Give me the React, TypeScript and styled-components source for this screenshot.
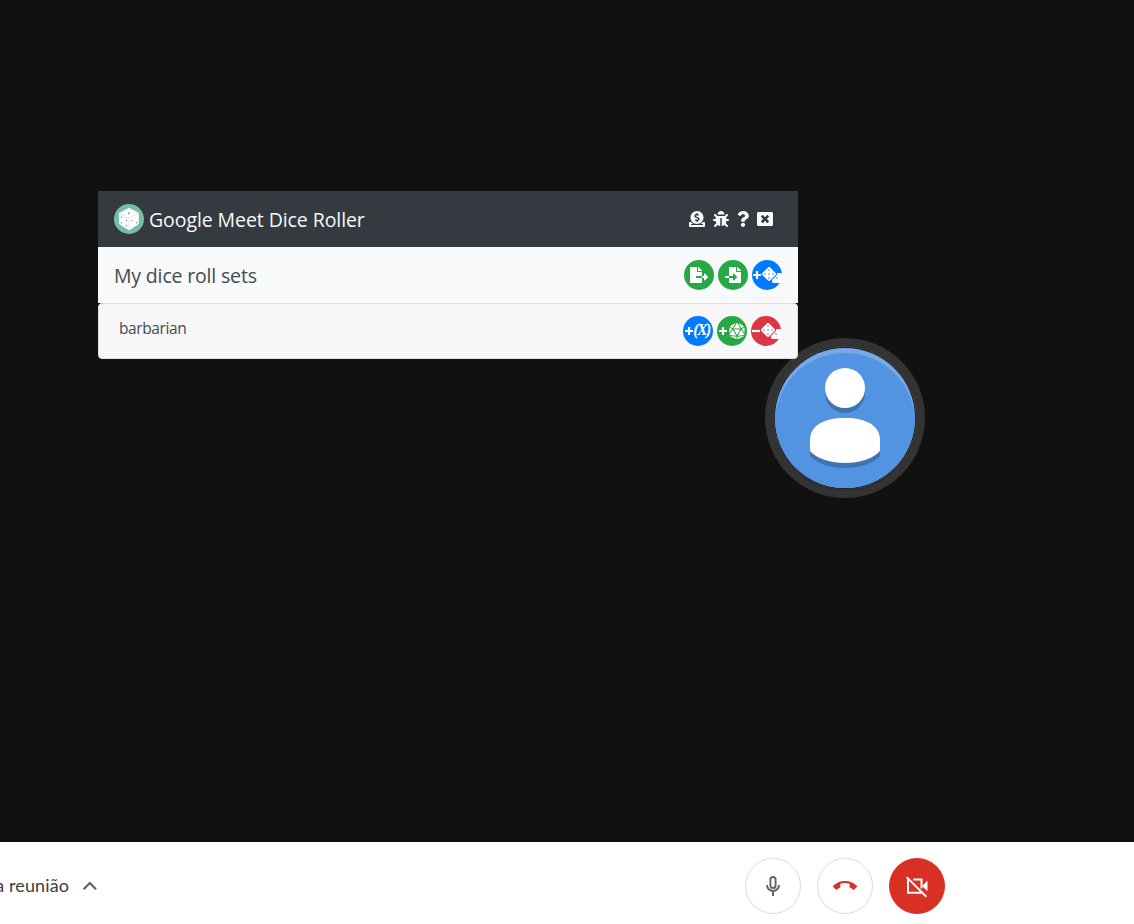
import React from "react";
import styled, { createGlobalStyle } from "styled-components";
import { FaBug, FaDice, FaDiceD20, FaDonate, FaFileExport, FaFileImport, FaQuestion, FaWindowClose } from "react-icons/fa";
import { MdCallEnd } from "react-icons/md";

const GlobalStyle = createGlobalStyle`
  *, *::before, *::after { box-sizing: border-box; }
  body { margin: 0; background: #111; overflow: hidden; }
`;

const Page = styled.div`
  height: 924px;
  display: flex;
  flex-direction: column;
  overflow: hidden;
  background: #111;
  font-family: "Open Sans", "Noto Sans", sans-serif;
`;

const Stage = styled.main`
  position: relative;
  flex: 1;
`;

const Avatar = styled.svg`
  position: absolute;
  left: 765px;
  top: 338px;
  width: 160px;
  height: 160px;
`;

const Dialog = styled.section`
  position: absolute;
  left: 98px;
  top: 191px;
  width: 700px;
`;

const Bar = styled.header<{ $dark?: boolean }>`
  height: 56px;
  padding: 0 16px;
  display: flex;
  align-items: center;
  background: ${(p) => (p.$dark ? "#343a40" : "#f8f9fa")};
  color: ${(p) => (p.$dark ? "#f8f9fa" : "#454a50")};
`;

const Title = styled.h1`
  flex: 1;
  margin: 0 0 0 5px;
  font-size: 19.5px;
  line-height: 30px;
  font-weight: 400;
  letter-spacing: -0.08px;
  padding-top: 1px;
  white-space: nowrap;
`;

const Subtitle = styled.h2`
  flex: 1;
  margin: 0;
  padding-top: 2px;
  font-size: 19.5px;
  line-height: 30px;
  font-weight: 400;
  letter-spacing: -0.17px;
  white-space: nowrap;
`;

const HeaderLinks = styled.nav`
  display: flex;
  align-items: center;
  gap: 8px;
  margin-right: 9px;
  svg { display: block; }
`;

const QuestionIcon = styled(FaQuestion)`
  width: 12px;
  height: 16px;
`;

const Card = styled.article`
  height: 56px;
  padding: 0 16px 0 20px;
  display: flex;
  align-items: center;
  background: #f7f7f7;
  border: 1px solid #dfdfdf;
  border-radius: 4px;
`;

const SetName = styled.span`
  flex: 1;
  padding-bottom: 6px;
  font-size: 15.5px;
  line-height: 24px;
  font-weight: 400;
  letter-spacing: -0.4px;
  color: #454a50;
`;

const Actions = styled.div`
  display: flex;
  gap: 4px;
`;

const RoundButton = styled.button<{ $color: string; $gap?: number }>`
  width: 30px;
  height: 30px;
  padding: 0;
  border: 0;
  border-radius: 50%;
  display: flex;
  align-items: center;
  justify-content: center;
  gap: ${(p) => p.$gap ?? 0}px;
  background: ${(p) => p.$color};
  color: #fff;
  svg { display: block; flex: none; }
`;

const Variable = styled.span`
  font: italic bold 16px/20px "Liberation Serif", serif;
  letter-spacing: -1.6px;
  padding: 0 1px 2px 0;
`;

const Footer = styled.footer`
  height: 82px;
  padding-top: 6px;
  display: flex;
  align-items: center;
  background: #fff;
`;

const Details = styled.div`
  width: 745px;
  display: flex;
  align-items: center;
  color: #5f6368;
`;

const DetailsLabel = styled.span`
  width: 69px;
  margin-right: 9px;
  padding-bottom: 2px;
  display: flex;
  justify-content: flex-end;
  overflow: hidden;
  white-space: nowrap;
  color: #3c4043;
  font: 400 18px/24px Lato, sans-serif;
  letter-spacing: 0.1px;
`;

const Controls = styled.div`
  display: flex;
  gap: 16px;
`;

const CallButton = styled.button<{ $off?: boolean; $ink: string }>`
  width: 56px;
  height: 56px;
  padding: 0;
  border-radius: 50%;
  border: 1px solid ${(p) => (p.$off ? "#d93025" : "#dadce0")};
  background: ${(p) => (p.$off ? "#d93025" : "#fff")};
  color: ${(p) => p.$ink};
  display: flex;
  align-items: center;
  justify-content: center;
`;

const Logo = () => (
  <svg width="30" height="30" viewBox="0 0 30 30">
    <circle cx="15" cy="15" r="15" fill="#76bda9" />
    <path d="M15 4.2 24.5 9.2 24.3 20 15 26 5.7 20 5.3 9.2Z" fill="#fff" stroke="#f0f2f1" strokeLinejoin="round" />
    <path d="M5.5 9.3 15 14.2 24.4 9.3M15 14.2V25.5" fill="none" stroke="#dfe2e1" strokeWidth=".9" />
    <g fill="#8d9896">
      <circle cx="15" cy="9.3" r="1" />
      <circle cx="7.5" cy="13.3" r=".8" />
      <circle cx="7.4" cy="18.8" r=".8" />
      <circle cx="12.5" cy="16.8" r=".8" />
      <circle cx="12.5" cy="21.5" r=".8" />
      <circle cx="17.7" cy="16.8" r=".8" />
      <circle cx="22.8" cy="18.8" r=".8" />
    </g>
  </svg>
);

const Sign = ({ minus }: { minus?: boolean }) => (
  <svg width="8" height="8" viewBox="0 0 8 8">
    <path d={minus ? "M0 4H8" : "M0 4H8M4 0V8"} stroke="#fff" strokeWidth="2.2" />
  </svg>
);

const ChevronUp = () => (
  <svg width="24" height="24" viewBox="0 0 24 24" fill="none" stroke="currentColor" strokeWidth="2.2">
    <path d="M5.6 15.2 11.8 9 18 15.2" />
  </svg>
);

const Mic = () => (
  <svg width="24" height="24" viewBox="0 0 24 24" fill="none" stroke="currentColor" strokeWidth="1.9">
    <rect x="9.4" y="3" width="5.2" height="11" rx="2.6" />
    <path d="M6 11a6 6 0 0 0 12 0M12 17v5" />
  </svg>
);

const CameraOff = () => (
  <svg width="24" height="24" viewBox="0 0 24 24" fill="none" stroke="currentColor" strokeWidth="2">
    <path d="M3 5V18.8H17M8.3 5.5H16.5V14.5M1.7 3.1 21.3 22.7" />
    <path d="M17 12 22.5 6.8V17.2Z" fill="currentColor" stroke="none" />
  </svg>
);

export default function App() {
  return (
    <Page>
      <GlobalStyle />
      <Stage>
        <Avatar viewBox="0 0 160 160">
          <defs>
            <clipPath id="disc"><circle cx="80" cy="80" r="70" /></clipPath>
          </defs>
          <circle cx="80" cy="80" r="80" fill="#333" />
          <circle cx="80" cy="81" r="71.5" fill="#242424" />
          <circle cx="80" cy="80" r="71.7" fill="#444" />
          <circle cx="80" cy="80" r="71" fill="#222" />
          <g clipPath="url(#disc)">
            <rect width="160" height="160" fill="#76a9e8" />
            <circle cx="80" cy="85" r="70" fill="#5294e2" />
            <rect y="85" width="160" height="75" fill="#5294e2" />
            <g fill="#3f74b3" transform="translate(0 5)">
              <circle cx="80" cy="50" r="20" />
              <path d="M45 102C45 88 58 80 80 80S115 88 115 102V113C108 121 94 125 80 125S52 121 45 113Z" />
            </g>
            <g fill="#fff">
              <circle cx="80" cy="50" r="20" />
              <path d="M45 102C45 88 58 80 80 80S115 88 115 102V113C108 121 94 125 80 125S52 121 45 113Z" />
            </g>
          </g>
        </Avatar>
        <Dialog>
          <Bar $dark>
            <Logo />
            <Title>Google Meet Dice Roller</Title>
            <HeaderLinks>
              <FaDonate size={16} />
              <FaBug size={16} />
              <QuestionIcon />
              <FaWindowClose size={16} />
            </HeaderLinks>
          </Bar>
          <Bar as="div">
            <Subtitle>My dice roll sets</Subtitle>
            <Actions>
              <RoundButton $color="#28a745"><FaFileExport size={18} /></RoundButton>
              <RoundButton $color="#28a745"><FaFileImport size={16} /></RoundButton>
              <RoundButton $color="#007bff" $gap={1}><Sign /><FaDice size={20} /></RoundButton>
            </Actions>
          </Bar>
          <Card>
            <SetName>barbarian</SetName>
            <Actions>
              <RoundButton $color="#007bff"><Sign /><Variable>(X)</Variable></RoundButton>
              <RoundButton $color="#28a745" $gap={2}><Sign /><FaDiceD20 size={16} /></RoundButton>
              <RoundButton $color="#dc3545" $gap={1}><Sign minus /><FaDice size={20} /></RoundButton>
            </Actions>
          </Card>
        </Dialog>
      </Stage>
      <Footer>
        <Details>
          <DetailsLabel>a reunião</DetailsLabel>
          <ChevronUp />
        </Details>
        <Controls>
          <CallButton $ink="#5f6368"><Mic /></CallButton>
          <CallButton $ink="#d93025"><MdCallEnd size={24} /></CallButton>
          <CallButton $off $ink="#fff"><CameraOff /></CallButton>
        </Controls>
      </Footer>
    </Page>
  );
}
